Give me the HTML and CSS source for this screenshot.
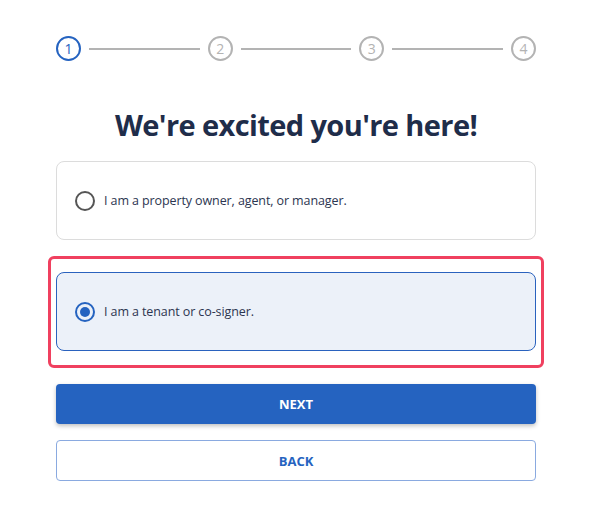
FILE: index.html
```html
<!DOCTYPE html>
<html lang="en">
<head>
    <meta charset="UTF-8">
    <meta name="viewport" content="width=device-width, initial-scale=1.0">
    <title>Welcome | Sign Up</title>
    <link rel="stylesheet" href="styles.css">
</head>
<body>

<div class="page">
    <div class="stepper">
        <span class="step active">1</span>
        <span class="line"></span>
        <span class="step">2</span>
        <span class="line"></span>
        <span class="step">3</span>
        <span class="line"></span>
        <span class="step">4</span>
    </div>

    <h1>We're excited you're here!</h1>

    <label class="option">
        <input type="radio" name="role" value="owner">
        <span class="radio"></span>
        I am a property owner, agent, or manager.
    </label>

    <div class="highlight">
        <label class="option selected">
            <input type="radio" name="role" value="tenant" checked>
            <span class="radio"></span>
            I am a tenant or co-signer.
        </label>
    </div>

    <button class="btn btn-primary">NEXT</button>
    <button class="btn btn-outline">BACK</button>
</div>

</body>
</html>
```

FILE: styles.css
```css
* {
    margin: 0;
    padding: 0;
    box-sizing: border-box;
}

body {
    font-family: 'Open Sans', 'Noto Sans', Arial, sans-serif;
    background: #fff;
    color: #1f2d4a;
}

.page {
    width: 480px;
    margin-left: 56px;
    padding-top: 36px;
}

/* Stepper */
.stepper {
    display: flex;
    align-items: center;
    height: 25px;
}

.step {
    width: 25px;
    height: 25px;
    flex: none;
    border: 2px solid #b3b3b3;
    border-radius: 50%;
    color: #b3b3b3;
    font-size: 14px;
    display: flex;
    align-items: center;
    justify-content: center;
}

.step.active {
    border-color: #2563c0;
    color: #2563c0;
}

.line {
    flex: 1;
    height: 2px;
    background: #b3b3b3;
    margin: 0 8px;
}

h1 {
    text-align: center;
    font-size: 29px;
    font-weight: 700;
    color: #1f2d4a;
    letter-spacing: -0.6px;
    margin-top: 44px;
    margin-bottom: 16px;
    line-height: 40px;
}

/* Options */
.option {
    display: flex;
    align-items: center;
    height: 79px;
    padding-left: 18px;
    border: 1px solid #dcdcdc;
    border-radius: 8px;
    font-size: 12.5px;
    letter-spacing: -0.1px;
    color: #2c3550;
    cursor: pointer;
}

.option input {
    display: none;
}

.radio {
    width: 20px;
    height: 20px;
    border: 2px solid #555;
    border-radius: 50%;
    margin-right: 9px;
    display: flex;
    align-items: center;
    justify-content: center;
}

.option.selected {
    background: #ecf1f9;
    border-color: #2a62be;
}

.option.selected .radio {
    border-color: #2563c0;
}

.option.selected .radio::after {
    content: '';
    width: 10px;
    height: 10px;
    border-radius: 50%;
    background: #2563c0;
}

.highlight {
    margin: 16px -8px 16px -8px;
    padding: 13px 5px 14px 5px;
    border: 3px solid #f0405f;
    border-radius: 6px;
}

/* Buttons */
.btn {
    display: block;
    width: 100%;
    height: 40px;
    border-radius: 4px;
    font-family: inherit;
    font-size: 13px;
    font-weight: 700;
    cursor: pointer;
}

.btn-primary {
    background: #2563c0;
    color: #fff;
    border: none;
    box-shadow: 0 2px 4px rgba(0, 0, 0, 0.25);
}

.btn-outline {
    margin-top: 16px;
    height: 41px;
    background: #fff;
    color: #2563c0;
    border: 1px solid #8aaae0;
}
```
